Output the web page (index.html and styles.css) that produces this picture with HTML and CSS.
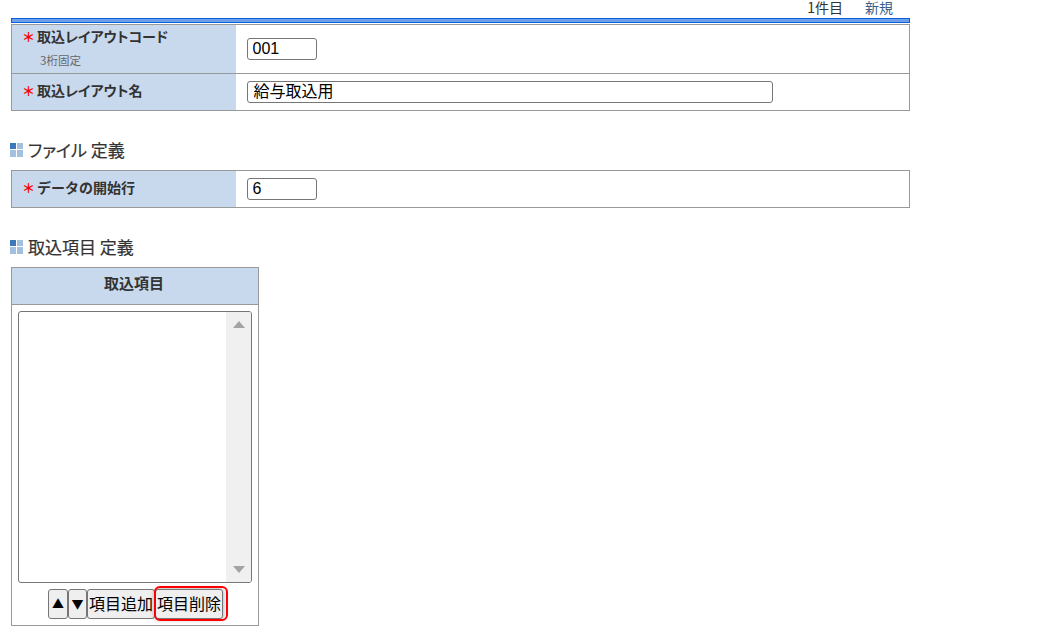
FILE: index.html
```html
<!DOCTYPE html>
<html lang="ja">
<head>
<meta charset="utf-8">
<title>取込レイアウト</title>
<link rel="stylesheet" href="styles.css">
</head>
<body>
<div class="page">
  <div class="topbar"><span class="count">1件目</span><a class="new" href="#">新規</a></div>
  <div class="bluebar"></div>
  <table class="form first">
    <tr class="r1">
      <th><span class="req">＊</span><span class="pk">取込レイアウトコード</span><div class="hint">3桁固定</div></th>
      <td><input class="code" type="text" value="001"></td>
    </tr>
    <tr class="r2">
      <th><span class="req">＊</span><span class="pk">取込レイアウト名</span></th>
      <td><input class="name" type="text" value="給与取込用"></td>
    </tr>
  </table>
  <h2 class="heading h-file"><span class="icon"><i class="dark"></i><i></i><i></i><i></i></span><span class="pk file-title">ファイル 定義</span></h2>
  <table class="form">
    <tr class="r2">
      <th><span class="req">＊</span>データの開始行</th>
      <td><input class="code" type="text" value="6"></td>
    </tr>
  </table>
  <h2 class="heading h-items"><span class="icon"><i class="dark"></i><i></i><i></i><i></i></span><span class="gap">取込項目 定義</span></h2>
  <div class="items">
    <div class="items-head">取込項目</div>
    <div class="items-body">
      <div class="listbox">
        <div class="scroll">
          <svg width="12" height="7" viewBox="0 0 12 7"><path d="M6 0 12 7H0Z"/></svg>
          <svg width="12" height="7" viewBox="0 0 12 7"><path d="M0 0H12L6 7Z"/></svg>
        </div>
      </div>
      <div class="buttons">
        <button class="btn arrow" type="button">▲</button><button class="btn arrow arrow-down" type="button">▼</button><button class="btn" type="button">項目追加</button><button class="btn focus" type="button">項目削除</button>
      </div>
    </div>
  </div>
</div>
</body>
</html>
```
FILE: styles.css
```css
* { box-sizing: border-box; }
html, body { margin: 0; padding: 0; background: #fff; }
body {
  font-family: "Noto Sans CJK JP", "Liberation Sans", sans-serif;
  color: #333;
  overflow: hidden;
  height: 642px;
}
.page { padding-left: 11px; width: 910px; }
.topbar {
  height: 18px;
  display: flex;
  justify-content: flex-end;
  gap: 22px;
  padding-right: 17px;
  font-size: 14px;
  line-height: 14px;
}
.count { color: #333; }
.new { color: #3a5f8c; text-decoration: none; }
.bluebar {
  height: 5px;
  background: #6f9fe8;
  border: 1px solid #0a5fdc;
}
.pk { font-feature-settings: "palt"; }
.form {
  width: 899px;
  border-collapse: collapse;
  margin-top: 1px;
  border: 1px solid #999;
}
.form th {
  width: 224px;
  background: #c8d9ee;
  text-align: left;
  font-size: 14px;
  font-weight: bold;
  padding: 0 0 4px 11px;
  vertical-align: middle;
  line-height: 20px;
  color: #333;
}
.form td { padding: 0 0 0 11px; vertical-align: middle; }
.form tr + tr th, .form tr + tr td { border-top: 1px solid #999; }
.r1 { height: 49px; }
.r2 { height: 37px; }
.req {
  display: inline-block;
  width: 14px;
  margin-left: -1px;
  margin-right: 1px;
  color: #f00;
  font-size: 13px;
  font-weight: bold;
}
.hint {
  font-size: 11.5px;
  font-weight: normal;
  color: #666;
  padding-left: 17px;
  line-height: 16px;
  margin-top: 5px;
}
input {
  font-family: "Liberation Sans", "Noto Sans CJK JP", sans-serif;
  font-size: 16px;
  color: #000;
  height: 22px;
  border: 1px solid #767676;
  border-radius: 3px;
  padding: 1px 5px;
  display: block;
  background: #fff;
}
.code { width: 70px; }
.name { width: 526px; font-family: "Noto Sans CJK JP", sans-serif; padding: 0 6px 5px; }
.heading {
  font-size: 17px;
  font-weight: normal;
  color: #333;
  margin: 0;
  display: flex;
  align-items: center;
  margin-left: -1px;
  line-height: 22px;
  -webkit-text-stroke: 0.2px #333;
}
.h-file, .h-items { margin-top: 28px; margin-bottom: 9px; }
.file-title { margin-left: 1px; }
.gap { margin-left: 1px; }
.icon {
  display: grid;
  grid-template-columns: 6px 6px;
  grid-template-rows: 6px 7px;
  gap: 1px;
  margin-right: 3px;
  width: 14px;
}
.icon i { background: #a3c0e0; display: block; }
.icon i.dark { background: #3f78b8; }
.items {
  width: 248px;
  height: 359px;
  border: 1px solid #999;
}
.items-head {
  height: 37px;
  background: #c8d9ee;
  border-bottom: 1px solid #999;
  text-align: center;
  font-size: 15px;
  font-weight: bold;
  line-height: 30px;
  padding-right: 2px;
}
.items-body { padding: 6px 6px 0; }
.listbox {
  width: 234px;
  height: 272px;
  border: 1px solid #767676;
  border-radius: 3px;
  display: flex;
  justify-content: flex-end;
  overflow: hidden;
}
.scroll {
  width: 25px;
  background: #f0f0f0;
  display: flex;
  flex-direction: column;
  justify-content: space-between;
  align-items: center;
  padding: 9px 0 9px;
}
.scroll svg { fill: #a3a3a3; display: block; }
.buttons {
  display: flex;
  justify-content: center;
  margin-top: 6px;
  padding-left: 1px;
}
.btn {
  height: 30px;
  font-family: "Noto Sans CJK JP", sans-serif;
  font-size: 16px;
  color: #000;
  background: #efefef;
  border: 1px solid #767676;
  border-radius: 3px;
  padding: 0 1px 3px;
  line-height: 20px;
  white-space: nowrap;
}
.arrow { width: 20px; padding: 0; font-size: 12px; }
.arrow-down { width: 19px; }
.focus {
  position: relative;
  z-index: 1;
  box-shadow: 0 0 5px rgba(0,0,0,.4);
}
.focus::after {
  content: "";
  position: absolute;
  left: -2px;
  right: -6px;
  top: -4px;
  bottom: -3px;
  border: 2px solid #f00;
  border-radius: 6px;
}
```
